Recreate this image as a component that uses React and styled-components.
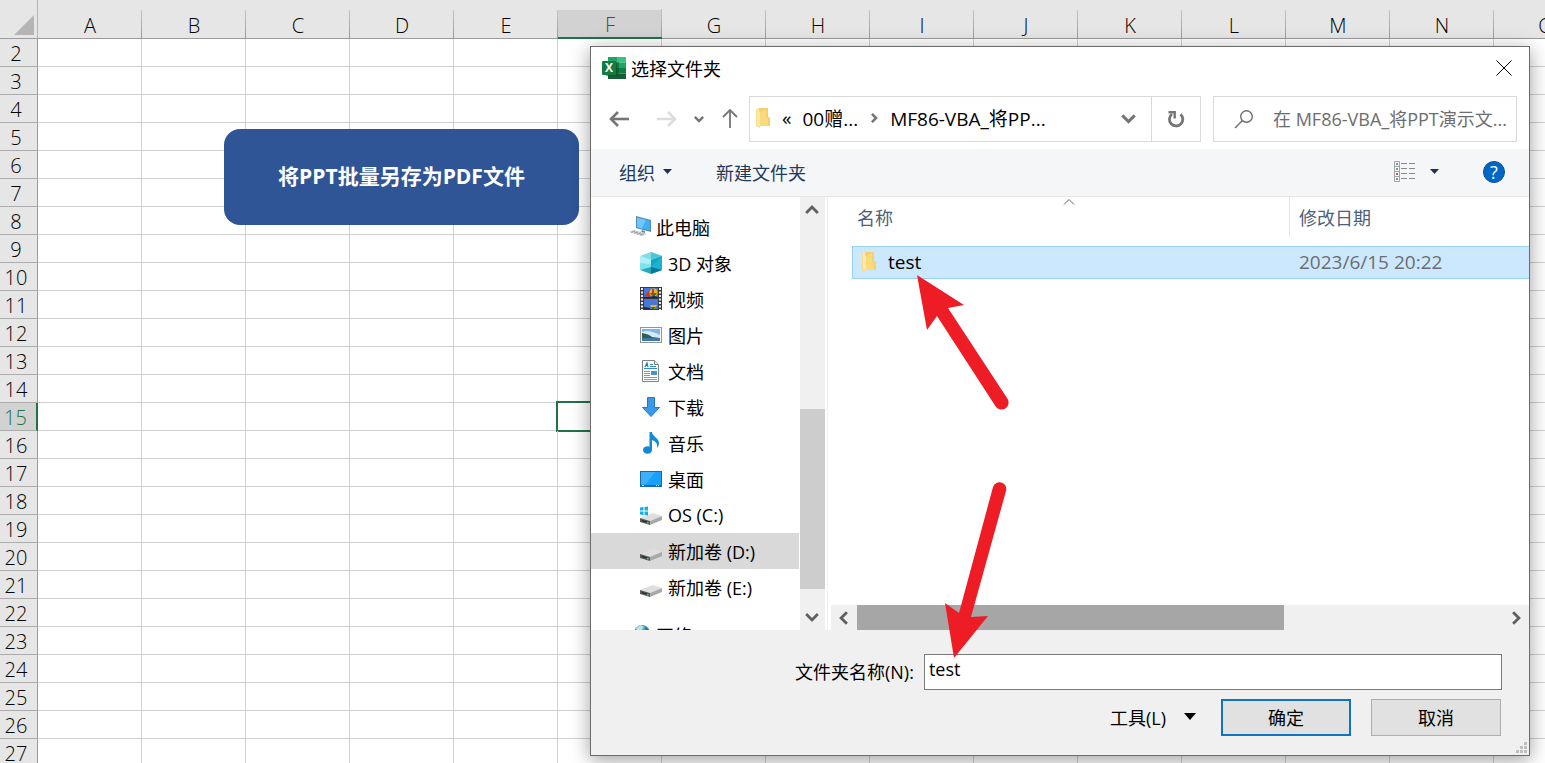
import React, { useState } from "react";
import styled, { createGlobalStyle } from "styled-components";

const GlobalStyle = createGlobalStyle`
  * {
    box-sizing: border-box;
  }

  body {
    margin: 0;
    overflow: hidden;
    font-family: "Open Sans", "Noto Sans CJK SC", sans-serif;
    font-size: 18px;
    color: #000;
  }

  button,
  input {
    font: inherit;
    color: inherit;
  }

  svg {
    display: block;
    flex: none;
  }
`;

const Screen = styled.div`
  position: relative;
  height: 100vh;
  overflow: hidden;
  background: #fff;
`;

/* ---------- sheet ---------- */

const Sheet = styled.table`
  width: 1598px;
  table-layout: fixed;
  border-collapse: separate;
  border-spacing: 0;
  font-size: 20px;
  line-height: 24px;
`;

const Corner = styled.th`
  width: 38px;
  height: 39px;
  padding: 0 3px 3px 0;
  vertical-align: bottom;
  background: #e6e6e6;
  border-right: 1px solid #b4b4b4;
  border-bottom: 1px solid #9b9b9b;

  svg {
    margin-left: auto;
  }
`;

const ColumnHead = styled.th`
  width: 104px;
  height: 39px;
  padding: 0;
  vertical-align: bottom;
  font-weight: 300;
  color: ${(props) => (props.$active ? "#2f5c42" : "#000")};
  background: linear-gradient(#c4c4c4, #9a9a9a) right bottom / 1px 28px no-repeat,
    linear-gradient(${(props) => (props.$active ? "#d2d2d2, #d2d2d2" : "#e6e6e6, #e6e6e6")}) right bottom / 100% 27px no-repeat,
    #e6e6e6;
  border-bottom: ${(props) => (props.$active ? "2px solid #217346" : "1px solid #9b9b9b")};
`;

const RowHead = styled.th`
  height: 28px;
  padding: 3px 5px 0 0;
  font-weight: 300;
  color: ${(props) => (props.$active ? "#217346" : "#000")};
  background: ${(props) => (props.$active ? "#d2d2d2" : "#e6e6e6")};
  border-right: ${(props) => (props.$active ? "2px solid #217346" : "1px solid #9b9b9b")};
  border-bottom: 1px solid #ababab;
`;

const Cell = styled.td`
  position: relative;
  height: 28px;
  padding: 0;
  border-right: 1px solid #d0d0d0;
  border-bottom: 1px solid #d0d0d0;
`;

const ActiveCell = styled.div`
  position: absolute;
  inset: -2px;
  border: 2px solid #217346;
`;

const MacroButton = styled.button`
  position: absolute;
  left: 224px;
  top: 129px;
  width: 355px;
  height: 96px;
  padding: 0 0 4px;
  border: none;
  border-radius: 16px;
  background: #2f5597;
  color: #fff;
  font-size: 21px;
  font-weight: 700;
`;

/* ---------- dialog ---------- */

const Dialog = styled.section`
  position: absolute;
  left: 590px;
  right: 15px;
  top: 46px;
  bottom: 7px;
  display: flex;
  flex-direction: column;
  background: #fff;
  border: 1px solid #6b6b6b;
  box-shadow: 0 4px 18px rgba(0, 0, 0, 0.38);
`;

const TitleBar = styled.header`
  display: flex;
  align-items: center;
  height: 44px;
  padding: 0 14px 2px 11px;
  gap: 5px;
`;

const Title = styled.h1`
  flex: 1;
  margin: 0;
  font-size: 18px;
  font-weight: 400;
`;

const IconButton = styled.button`
  display: flex;
  align-items: center;
  justify-content: center;
  flex: none;
  width: ${(props) => props.$width || 16}px;
  height: 100%;
  padding: 0;
  border: none;
  background: none;
`;

const CloseButton = styled(IconButton)`
  width: 22px;
`;

const NavBar = styled.nav`
  display: flex;
  height: 58px;
  padding: 5px 12px 7px 10px;
`;

const NavButtons = styled.div`
  display: flex;
  align-items: center;
  gap: 5px;
  width: 148px;
`;

const AddressBar = styled.div`
  display: flex;
  flex: 1;
  margin-right: 12px;
  border: 1px solid #d9d9d9;
`;

const Crumbs = styled.div`
  display: flex;
  flex: 1;
  align-items: center;
  gap: 11px;
  padding: 0 15px 2px 6px;
  font-size: 19px;
`;

const Crumb = styled.button`
  padding: 0;
  border: none;
  background: none;
  white-space: nowrap;
`;

const HistoryButton = styled(Crumb)`
  margin-left: auto;
`;

const RefreshCell = styled.div`
  width: 49px;
  border-left: 1px solid #d9d9d9;
`;

const SearchBox = styled.label`
  display: flex;
  align-items: center;
  gap: 19px;
  width: 304px;
  padding-left: 20px;
  border: 1px solid #d9d9d9;
`;

const SearchInput = styled.input`
  flex: 1;
  min-width: 0;
  padding: 0;
  border: none;
  outline: none;
  background: none;

  &::placeholder {
    color: #6d6d6d;
    opacity: 1;
  }
`;

const Toolbar = styled.div`
  display: flex;
  align-items: center;
  height: 48px;
  padding: 0 24px 2px 28px;
  color: #1e395b;
  background: #f5f6f7;
  border-bottom: 1px solid #e4e6e8;
`;

const ToolButton = styled.button`
  display: flex;
  align-items: center;
  gap: 8px;
  margin-right: 44px;
  padding: 0;
  border: none;
  background: none;
`;

const ViewButton = styled(ToolButton)`
  gap: 14px;
  margin-left: auto;
`;

const HelpButton = styled.button`
  width: 22px;
  height: 22px;
  padding: 0;
  border: 1px solid #0a4f96;
  border-radius: 50%;
  background: #0067c5;
  color: #fff;
  line-height: 20px;
`;

const Panes = styled.div`
  display: flex;
  flex: 1;
  min-height: 0;
`;

const Tree = styled.ul`
  width: 208px;
  margin: 0;
  padding: 12px 0 0;
  overflow: hidden;
  list-style: none;
`;

const TreeItem = styled.button`
  display: flex;
  align-items: center;
  gap: ${(props) => (props.$root ? 5 : 6)}px;
  width: 100%;
  height: 36px;
  margin-top: ${(props) => (props.$spaced ? 12 : 0)}px;
  padding: 0 0 1px ${(props) => (props.$root ? 38 : 49)}px;
  border: none;
  background: ${(props) => (props.$selected ? "#d9d9d9" : "none")};
  white-space: nowrap;
`;

const ScrollBar = styled.div`
  display: flex;
  flex: none;
  flex-direction: ${(props) => (props.$horizontal ? "row" : "column")};
  ${(props) => (props.$horizontal ? "height: 25px;" : "width: 25px; margin-left: 1px;")}
  background: #f0f0f0;
`;

const ScrollButton = styled.button`
  display: flex;
  align-items: center;
  justify-content: center;
  flex: 0 0 26px;
  padding: 0 1px 0 0;
  border: none;
  background: none;
`;

const ScrollPart = styled.div`
  flex: ${(props) => props.$size} 0 0;
  background: ${(props) => props.$color || "none"};
`;

const FilePane = styled.div`
  display: flex;
  flex: 1;
  flex-direction: column;
  margin-left: 2px;
  padding-left: 3px;
  border-left: 1px solid #f0f0f0;
`;

const FileArea = styled.div`
  flex: 1;
  padding-left: 21px;
`;

const FileTable = styled.table`
  width: 100%;
  table-layout: fixed;
  border-collapse: separate;
  border-spacing: 0;
`;

const FileHead = styled.th`
  position: relative;
  width: ${(props) => props.$width || "auto"};
  height: 40px;
  padding: 0 0 0 ${(props) => props.$indent}px;
  font-weight: 400;
  text-align: left;
  color: #4c607a;
  border-right: ${(props) => (props.$divider ? "1px solid #e5e5e5" : "none")};
`;

const SortMark = styled.span`
  position: absolute;
  top: -1px;
  left: 50%;
  margin-left: -8px;
`;

const HeadGap = styled.td`
  height: 9px;
  padding: 0;
`;

const FileCell = styled.td`
  height: 33px;
  padding: 0 0 2px 9px;
  font-size: 19px;
  line-height: 26px;
  color: ${(props) => (props.$muted ? "#6d6d6d" : "#000")};
  background: #cce8ff;
  border-top: 1px solid #99d1f5;
  border-bottom: 1px solid #99d1f5;

  &:first-child {
    border-left: 1px solid #99d1f5;
  }
`;

const FileName = styled.div`
  display: flex;
  align-items: center;
  gap: 11px;
`;

const Footer = styled.footer`
  position: relative;
  height: 125px;
  padding: 24px 27px 0;
  background: #f0f0f0;
`;

const NameRow = styled.div`
  display: flex;
  align-items: center;
  gap: 10px;
  padding-left: 177px;

  label {
    padding-bottom: 2px;
  }
`;

const NameInput = styled.input`
  flex: 1;
  height: 36px;
  padding: 0 4px 6px;
  border: 1px solid #7a7a7a;
  border-radius: 0;
  outline: none;
  background: #fff;
`;

const ActionRow = styled.div`
  display: flex;
  align-items: center;
  justify-content: flex-end;
  gap: 20px;
  margin-top: 9px;
  padding-right: 1px;
`;

const ToolsButton = styled.button`
  display: flex;
  align-items: center;
  gap: 18px;
  margin-right: 5px;
  padding: 0 0 2px;
  border: none;
  background: none;
`;

const DialogButton = styled.button`
  width: 130px;
  height: 37px;
  padding: 0 0 2px;
  background: #e1e1e1;
  border: ${(props) => (props.$primary ? "2px solid #0f74c4" : "1px solid #adadad")};
`;

const Grip = styled.svg`
  position: absolute;
  right: 2px;
  bottom: 1px;
`;

const Pointer = styled.svg`
  position: absolute;
  left: ${(props) => props.$x}px;
  top: ${(props) => props.$y}px;
  pointer-events: none;
`;

/* ---------- icons ---------- */

const ExcelIcon = () => (
  <svg width="24" height="22" viewBox="0 0 24 22">
    <path d="M6 0h9v5.5H6z" fill="#21a366" />
    <path d="M15 0h9v5.5h-9z" fill="#33c481" />
    <path d="M6 5.5h9V11H6z" fill="#107c41" />
    <path d="M15 5.5h9V11h-9z" fill="#21a366" />
    <path d="M6 11h9v11H6z" fill="#185c37" />
    <path d="M15 11h9v5.500h-9z" fill="#107c41" />
    <path d="M15 16.500h9V22h-9z" fill="#185c37" />
    <rect x="4" y="5" width="13" height="14" fill="#0b4a29" opacity="0.5" />
    <rect x="0" y="4" width="14" height="14" rx="1" fill="#107c41" />
    <text x="7" y="15" textAnchor="middle" fontSize="12" fontWeight="700" fill="#fff">X</text>
  </svg>
);

const FolderIcon = ({ height = 20 }) => (
  <svg width="15" height={height} viewBox="0 0 15 20">
    <path d="M1 0h11v9l2 1v8H5L1 17z" fill="#f5cf6b" />
    <path d="M0 1l4 3v16l-4-2z" fill="#fbdc85" />
    <path d="M1 0h2v3l1 1v14l-3-1z" fill="#fde9b0" />
    <path d="M4 4l6-3v9l2 1v7H4z" fill="#fbda7c" />
  </svg>
);

const Chevron = ({ dir = "down", size = 12, color = "#606060", width = 2.4 }) => {
  const turn = { down: 0, left: 90, up: 180, right: 270 }[dir];
  return (
    <svg width={size} height={size} viewBox="0 0 12 12">
      <path d="M1 3.500l5 5 5-5" fill="none" stroke={color} strokeWidth={width} transform={`rotate(${turn} 6 6)`} />
    </svg>
  );
};

const Arrow = ({ dir, color = "#757575" }) => {
  const turn = { left: 0, up: 90, right: 180 }[dir];
  return (
    <svg width="22" height="22" viewBox="0 0 22 22">
      <g transform={`rotate(${turn} 11 11)`} fill="none" stroke={color} strokeWidth={dir === "up" ? 1.8 : 2.6}>
        <path d="M2 11h18" />
        <path d="M9 4l-7 7 7 7" />
      </g>
    </svg>
  );
};

const Triangle = ({ width = 9, height = 5, color = "#1e2f55" }) => (
  <svg width={width} height={height} viewBox="0 0 10 6" preserveAspectRatio="none">
    <path d="M0 0h10L5 6z" fill={color} />
  </svg>
);

const RefreshIcon = () => (
  <svg width="20" height="20" viewBox="0 0 20 20" fill="none" stroke="#757575" strokeWidth="2.800">
    <path d="M14.500 5.200A6.700 6.700 0 1 1 6 5" />
    <path d="M2.500 3.300h6.200v6.200" strokeWidth="2.400" />
  </svg>
);

const SearchIcon = () => (
  <svg width="20" height="20" viewBox="0 0 20 20" fill="none" stroke="#6d6d6d" strokeWidth="1.400">
    <circle cx="12.500" cy="7.500" r="5.800" />
    <path d="M8.400 11.600L1 19" />
  </svg>
);

const ViewIcon = () => (
  <svg width="22" height="21" viewBox="0 0 22 21" fill="none">
    <path d="M0.500 0.500h5v20h-5zM0.500 5.500h5M0.500 10.500h5M0.500 15.500h5" stroke="#a3a3a3" />
    <path d="M2 3h2M2 8h2M2 18h2" stroke="#58708a" strokeWidth="1.500" />
    <path d="M2 13h2" stroke="#a02c2c" strokeWidth="1.500" />
    <path d="M7 2.500h6M15 2.500h6M7 7.500h6M15 7.500h6M7 12.500h6M15 12.500h6M7 17.500h6M15 17.500h6" stroke="#8a8a8a" />
  </svg>
);

const ComputerIcon = () => (
  <svg width="22" height="22" viewBox="0 0 22 22">
    <path d="M7 0l15 4v12L7 12z" fill="#4d8db8" />
    <path d="M8 1.500l13 3.500v9.500L8 11z" fill="#41aef5" />
    <path d="M8 1.500l9 2.400-4 8.500L8 11z" fill="#6fc6fa" />
    <path d="M13 14l3 1v2l-4-1z" fill="#7b8a94" />
    <path d="M0 16l5-2 13 4-5 2z" fill="#c9d1d6" />
    <path d="M2 16.500l4-1.500M5 17.400l4-1.500M8 18.300l4-1.500M11 19.200l4-1.500" stroke="#93a1aa" />
  </svg>
);

const CubeIcon = () => (
  <svg width="22" height="22" viewBox="0 0 22 22">
    <path d="M0 4l11-4 11 4-11 4z" fill="#7fdde8" />
    <path d="M11 0l11 4-11 4z" fill="#4cc5d6" />
    <path d="M0 4l11 4v8L0 18z" fill="#7fe3ee" />
    <path d="M0 4l11 4v4L0 11z" fill="#b0f0f5" />
    <path d="M0 18l11-3v7z" fill="#28a5bf" />
    <path d="M11 8l11-4v14l-11 4z" fill="#0fa5c5" />
    <path d="M22 4v14l-11-3z" fill="#1bb3d0" />
    <path d="M11 15l11 3-11 4z" fill="#077a98" />
  </svg>
);

const VideoIcon = () => (
  <svg width="22" height="23" viewBox="0 0 22 23">
    <rect width="22" height="23" fill="#3a3a3a" />
    <path d="M2 1v22M20 1v22" stroke="#eee" strokeWidth="2" strokeDasharray="2 1.500" />
    <path d="M4 1h14v10H4zM4 12h14v10H4z" fill="#4a76d6" />
    <path d="M4 9l5-5 1 6z" fill="#c6372c" />
    <circle cx="13.500" cy="5.500" r="4" fill="#e5b423" />
    <path d="M10 6h7l-3 4h-1z" fill="#287a3b" />
    <path d="M12 2h2v6h-2z" fill="#c6372c" />
    <path d="M4 10l6 0 4-1 4 1v1H4z" fill="#1c2648" />
    <path d="M10 18h7l-2 4h-3z" fill="#e5b423" />
    <path d="M11 20h5l-2 2h-2z" fill="#287a3b" />
    <path d="M4 20l6 1v1H4z" fill="#1c2648" />
  </svg>
);

const PictureIcon = () => (
  <svg width="22" height="16" viewBox="0 0 22 16">
    <rect x="0.500" y="0.500" width="21" height="15" fill="#fff" stroke="#8f9699" />
    <rect x="2" y="2" width="18" height="12" fill="#7eb4e8" />
    <path d="M2 5q6-3 18 3v3H2z" fill="#d6e9f5" />
    <path d="M2 6q7 1 10 4l8 1v1H2z" fill="#315f4c" />
    <path d="M2 11h18v3H2z" fill="#3f79a8" />
  </svg>
);

const DocumentIcon = () => (
  <svg width="22" height="22" viewBox="0 0 22 22">
    <path d="M2.500 0.500h12l4 4v17h-16z" fill="#fff" stroke="#7d8487" />
    <path d="M14.500 0.500v4h4" fill="#e5e9eb" stroke="#7d8487" />
    <path d="M5 7l2-4 1 4M6 5.500h2" stroke="#1979c9" fill="none" strokeWidth="1.200" />
    <path d="M10 4.500h3M10 6.500h6M4 8.500h13" stroke="#338dcc" />
    <path d="M4 11.500h6M4 13.500h6M4 15.500h6M4 17.500h13M4 19.500h13" stroke="#8c9599" />
    <rect x="11" y="11" width="6" height="4" fill="#4f91c2" />
  </svg>
);

const DownloadIcon = () => (
  <svg width="22" height="20" viewBox="0 0 22 20">
    <path d="M7.500 0.500h7v10h5L11 19.500 2.500 10.500h5z" fill="#3a99ea" stroke="#2478c2" />
  </svg>
);

const MusicIcon = () => (
  <svg width="22" height="22" viewBox="0 0 22 22">
    <ellipse cx="7.500" cy="18" rx="4.500" ry="3.800" fill="#1389d8" />
    <path d="M9.500 0H12c0 4 7 6 7 11 0 2-1 4-2 5 1-5-2-7-5-8v10H9.500z" fill="#1389d8" />
  </svg>
);

const DesktopIcon = () => (
  <svg width="22" height="16" viewBox="0 0 22 16">
    <rect x="0.500" y="0.500" width="21" height="15" fill="#18a0fb" stroke="#1769aa" />
    <path d="M1 1h14L6 13H1z" fill="#3db0fc" />
    <path d="M1 14.500h20" stroke="#1769aa" />
    <path d="M2 14.500h2M16 14.500h1M18 14.500h1" stroke="#fff" />
  </svg>
);

const DriveIcon = ({ system }) => (
  <svg width="22" height="22" viewBox="0 0 22 22">
    <path d="M0 14l13-5 9 3-12 5z" fill="#dedede" />
    <path d="M0 14l10 3v4L0 18z" fill="#555a58" />
    <path d="M10 17l12-5v4l-12 5z" fill="#a9a9a9" />
    <path d="M2 16l5 1.500v1L2 17.200z" fill="#1f2a25" />
    <path d="M7 18h1.500v1.200H7z" fill="#62d36f" />
    {system && (
      <path d="M0 3.500l3.500-.5v3.500H0zM4.500 3L8 2.500v4H4.500zM0 7.500h3.500V11L0 10.500zM4.500 7.500H8v4l-3.500-.5z" fill="#12b0ea" />
    )}
  </svg>
);

const NetworkIcon = () => (
  <svg width="22" height="22" viewBox="0 0 22 22">
    <circle cx="13" cy="9" r="8" fill="#4aa3cc" />
    <path d="M7 4l5-3 3 2-3 4-4 1z" fill="#b7e0ea" />
    <path d="M16 2l4 4-3 2z" fill="#2a7d6b" />
    <path d="M2 16l8-3 6 4-8 4z" fill="#8fa3ad" />
  </svg>
);

const COLUMNS = "ABCDEFGHIJKLMNO".split("");
const ROWS = Array.from({ length: 26 }, (_, i) => i + 2);

const TREE = [
  { label: "此电脑", icon: ComputerIcon, root: true },
  { label: "3D 对象", icon: CubeIcon },
  { label: "视频", icon: VideoIcon },
  { label: "图片", icon: PictureIcon },
  { label: "文档", icon: DocumentIcon },
  { label: "下载", icon: DownloadIcon },
  { label: "音乐", icon: MusicIcon },
  { label: "桌面", icon: DesktopIcon },
  { label: "OS (C:)", icon: DriveIcon, system: true },
  { label: "新加卷 (D:)", icon: DriveIcon },
  { label: "新加卷 (E:)", icon: DriveIcon },
  { label: "网络", icon: NetworkIcon, root: true, spaced: true },
];

const SheetGrid = () => (
  <Sheet>
    <thead>
      <tr>
        <Corner>
          <svg width="20" height="20" viewBox="0 0 20 20">
            <path d="M20 0v20H0z" fill="#b5b5b5" />
          </svg>
        </Corner>
        {COLUMNS.map((col) => (
          <ColumnHead key={col} $active={col === "F"}>{col}</ColumnHead>
        ))}
      </tr>
    </thead>
    <tbody>
      {ROWS.map((row) => (
        <tr key={row}>
          <RowHead $active={row === 15}>{row}</RowHead>
          {COLUMNS.map((col) => (
            <Cell key={col}>{row === 15 && col === "F" && <ActiveCell />}</Cell>
          ))}
        </tr>
      ))}
    </tbody>
  </Sheet>
);

const FolderDialog = () => {
  const [selected, setSelected] = useState("新加卷 (D:)");
  const [folder, setFolder] = useState("test");

  return (
    <Dialog role="dialog" aria-labelledby="dialog-title">
      <TitleBar>
        <ExcelIcon />
        <Title id="dialog-title">选择文件夹</Title>
        <CloseButton aria-label="关闭">
          <svg width="16" height="16" viewBox="0 0 16 16">
            <path d="M0.500 0.500l15 15M15.500 0.500l-15 15" stroke="#000" />
          </svg>
        </CloseButton>
      </TitleBar>

      <NavBar>
        <NavButtons>
          <IconButton aria-label="后退" $width={38}><Arrow dir="left" /></IconButton>
          <IconButton aria-label="前进" $width={44}><Arrow dir="right" color="#dcdcdc" /></IconButton>
          <IconButton aria-label="最近浏览的位置" $width={12}><Chevron size={10} color="#757575" width={3} /></IconButton>
          <IconButton aria-label="上移" $width={40}><Arrow dir="up" /></IconButton>
        </NavButtons>
        <AddressBar>
          <Crumbs>
            <FolderIcon />
            <Crumb>«</Crumb>
            <Crumb>00赠...</Crumb>
            <Chevron dir="right" size={10} color="#757575" width={3} />
            <span>MF86-VBA_将PP...</span>
            <HistoryButton aria-label="以前的位置"><Chevron size={15} color="#757575" /></HistoryButton>
          </Crumbs>
          <RefreshCell>
            <IconButton aria-label="刷新" $width={48}><RefreshIcon /></IconButton>
          </RefreshCell>
        </AddressBar>
        <SearchBox>
          <SearchIcon />
          <SearchInput aria-label="搜索" placeholder="在 MF86-VBA_将PPT演示文..." />
        </SearchBox>
      </NavBar>

      <Toolbar>
        <ToolButton>组织 <Triangle /></ToolButton>
        <ToolButton>新建文件夹</ToolButton>
        <ViewButton aria-label="更改视图"><ViewIcon /><Triangle /></ViewButton>
        <HelpButton aria-label="帮助">?</HelpButton>
      </Toolbar>

      <Panes>
        <Tree>
          {TREE.map(({ label, icon: Icon, root, spaced, system }) => (
            <li key={label}>
              <TreeItem
                $root={root}
                $spaced={spaced}
                $selected={selected === label}
                onClick={() => setSelected(label)}
              >
                <Icon system={system} />
                {label}
              </TreeItem>
            </li>
          ))}
        </Tree>
        <ScrollBar>
          <ScrollButton aria-label="向上滚动"><Chevron dir="up" size={14} /></ScrollButton>
          <ScrollPart $size={186} />
          <ScrollPart $size={180} $color="#cdcdcd" />
          <ScrollPart $size={15} />
          <ScrollButton aria-label="向下滚动"><Chevron size={14} /></ScrollButton>
        </ScrollBar>

        <FilePane>
          <FileArea>
            <FileTable>
              <thead>
                <tr>
                  <FileHead $width="438px" $indent={5} $divider>
                    名称
                    <SortMark><Chevron dir="up" width={1} /></SortMark>
                  </FileHead>
                  <FileHead $indent={9}>修改日期</FileHead>
                </tr>
              </thead>
              <tbody>
                <tr><HeadGap colSpan={2} /></tr>
                <tr>
                  <FileCell>
                    <FileName><FolderIcon />test</FileName>
                  </FileCell>
                  <FileCell $muted>2023/6/15 20:22</FileCell>
                </tr>
              </tbody>
            </FileTable>
          </FileArea>
          <ScrollBar $horizontal>
            <ScrollButton aria-label="向左滚动"><Chevron dir="left" size={14} /></ScrollButton>
            <ScrollPart $size={427} $color="#a6a6a6" />
            <ScrollPart $size={219} />
            <ScrollButton aria-label="向右滚动"><Chevron dir="right" size={14} /></ScrollButton>
          </ScrollBar>
        </FilePane>
      </Panes>

      <Footer>
        <NameRow>
          <label htmlFor="folder-name">文件夹名称(N):</label>
          <NameInput id="folder-name" value={folder} onChange={(e) => setFolder(e.target.value)} />
        </NameRow>
        <ActionRow>
          <ToolsButton>工具(L) <Triangle width={12} height={7} color="#000" /></ToolsButton>
          <DialogButton $primary>确定</DialogButton>
          <DialogButton>取消</DialogButton>
        </ActionRow>
        <Grip width="12" height="12" viewBox="0 0 12 12">
          <path d="M9 0h3v3H9zM9 4h3v3H9zM5 4h3v3H5zM9 8h3v3H9zM5 8h3v3H5zM1 8h3v3H1z" fill="#bfbfbf" />
        </Grip>
      </Footer>
    </Dialog>
  );
};

const App = () => (
  <Screen>
    <GlobalStyle />
    <SheetGrid />
    <MacroButton>将PPT批量另存为PDF文件</MacroButton>
    <FolderDialog />
    <Pointer $x={917} $y={275} width="92" height="136" viewBox="0 0 92 136" fill="#ee1c24">
      <path d="M0 0l47 30-16 3 59 90a7 7 0 0 1-11 9L20 41 10 55z" />
    </Pointer>
    <Pointer $x={944} $y={481} width="64" height="178" viewBox="0 0 64 178" fill="#ee1c24">
      <path d="M10 177L1 122l14 10L49 6a6.500 6.500 0 0 1 13 4L27 136l17-1z" />
    </Pointer>
  </Screen>
);

export default App;
